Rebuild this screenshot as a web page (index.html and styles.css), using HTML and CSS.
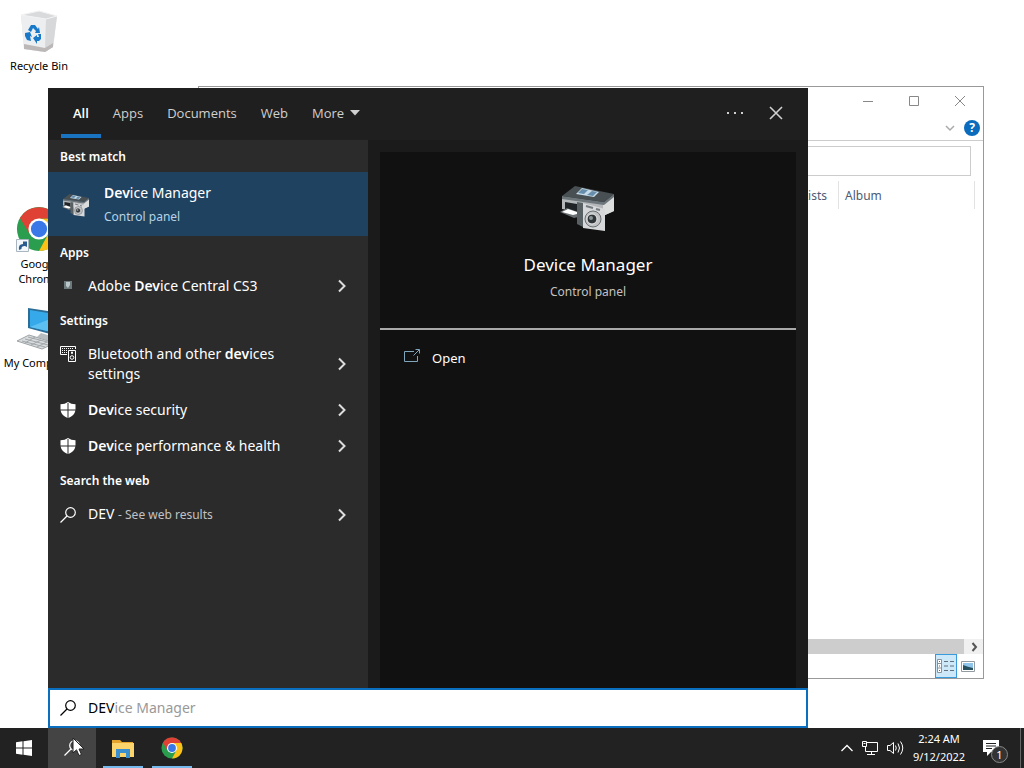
FILE: index.html
```html
<!DOCTYPE html>
<html lang="en">
<head>
  <meta charset="utf-8">
  <title>Desktop</title>
  <link rel="stylesheet" href="styles.css">
</head>
<body>
  <svg class="defs" width="0" height="0" aria-hidden="true">
    <symbol id="chrome" viewBox="0 0 48 48">
      <circle cx="24" cy="24" r="23" fill="#2a9d4e"/>
      <path d="M24 13 H44.200 A23 23 0 0 1 24 47 L33.500 29.500 Z" fill="#fbc116"/>
      <path d="M4.100 12.500 L14.500 29.500 L24 24 L24 13 L44 13 A23 23 0 0 0 4.100 12.500" fill="#df4234"/>
      <circle cx="24" cy="24" r="11" fill="#fff"/>
      <circle cx="24" cy="24" r="8.500" fill="#3b78e7"/>
    </symbol>
    <symbol id="chevron" viewBox="0 0 10 14">
      <path d="M2 1.500 L7.500 7 L2 12.500" fill="none" stroke="currentColor" stroke-width="2"/>
    </symbol>
    <symbol id="shield" viewBox="0 0 16 16">
      <path d="M8 0 Q11 2.200 15.500 2.200 V7.500 H8.500 V1 H7.500 V7.500 H.5 V2.200 Q5 2.200 8 0 Z M.6 8.500 H7.500 V16 Q1.500 13.500 .6 8.500 Z M8.500 8.500 H15.400 Q14.500 13.500 8.500 16 Z" fill="currentColor"/>
    </symbol>
    <symbol id="lens" viewBox="0 0 16 16">
      <circle cx="10.500" cy="5.500" r="4.800" fill="none" stroke="currentColor" stroke-width="1.200"/>
      <path d="M7 9 L.5 15.500" stroke="currentColor" stroke-width="1.200"/>
    </symbol>
    <symbol id="devices" viewBox="0 0 56 48">
      <path d="M2 14 L43 20 L54 12 V27 L43 32 L2 25 Z" fill="#b4b7b9"/>
      <path d="M43 20 L54 12 V27 L43 32 Z" fill="#dcdddd"/>
      <path d="M2 12 L15 2 L54 10 L44 18 Z" fill="#485054"/>
      <path d="M2 12 L44 18 L54 10 V13 L44 21 L2 15 Z" fill="#6d767a"/>
      <path d="M16 10 L22 4 L39 8 L34 13 Z" fill="#c8dbe8"/>
      <path d="M18 9 L22 5 L28 6 L24 10 Z M27 11 L32 7 L37 8 L33 12 Z" fill="#668eac"/>
      <path d="M5 18 L17 20 V29 L5 25 Z" fill="#202426"/>
      <path d="M0 28 L7 24 L18 28 V33 L14 34 Z" fill="#686e71"/>
      <path d="M2 28 L8 25 L17 28 V30 L13 31 Z" fill="#fff"/>
      <path d="M17 18 L23 19 V43 L17 40 Z" fill="#596064"/>
      <path d="M23 19 L45 25 V47 L23 44 Z" fill="#d7d8d9"/>
      <path d="M26 22 L33 24 M36 25 L40 26" stroke="#747b7f" stroke-width="2"/>
      <circle cx="33" cy="35" r="8" fill="#c1c3c5" stroke="#696f72"/>
      <circle cx="32" cy="35" r="5" fill="#303537" stroke="#eee"/>
      <circle cx="31" cy="34" r="2" fill="#899397"/>
    </symbol>
  </svg>

  <main class="desktop">
    <div class="shortcut bin">
      <svg width="40" height="44" viewBox="0 0 40 44">
        <path d="M2 5 L20 1 L38 6 L34 37 L26 42 L5 39 Z" fill="#e3e4e5"/>
        <path d="M2 5 L27 9 L26 42 L5 39 Z" fill="#eceef0"/>
        <path d="M27 9 L38 6 L34 37 L26 42 Z" fill="#d6d8da"/>
        <path d="M2 5 L20 1 L38 6 L27 9 Z" fill="#d8dadc" stroke="#f4f4f4"/>
        <path d="M5 34 L26 38 L34 33 V37 L26 42 L5 39 Z" fill="#bcb8b8"/>
        <g fill="#1979c9">
          <path d="M9 20 L12 15 H16 L19 19 L20 17 L21 23 H16 L17 21 L14 18 L12 22 Z"/>
          <path d="M6 23 L11 22 L13 27 L11 26 L12 31 L8 30 L6 26 Z"/>
          <path d="M14 28 L18 25 L18 27 L20 27 L19 24 L22 24 V29 L20 31 L18 31 V34 Z"/>
        </g>
      </svg>
      <span>Recycle Bin</span>
    </div>
    <div class="shortcut chrome">
      <div class="badged">
        <svg width="46" height="46"><use href="#chrome"/></svg>
        <svg class="arrow" width="13" height="13" viewBox="0 0 13 13">
          <path d="M.5 .5 H12.500 V12.500 H.5 Z" fill="#f4f8fb" stroke="#a9b5bf"/>
          <path d="M3 11 Q2 5 7 5 V2.500 H11 V8 L9 7 Q5 7 5.500 10 Z" fill="#2b5c90"/>
        </svg>
      </div>
      <span>Google Chrome</span>
    </div>
    <div class="shortcut computer">
      <svg width="44" height="44" viewBox="0 0 44 44">
        <path d="M11 1 L44 6 V30 L11 21 Z" fill="#2b6d96"/>
        <path d="M13 3 L43 8 V27 L13 20 Z" fill="#35a9ea"/>
        <path d="M13 20 L43 8 V27 Z" fill="#5cc0f2"/>
        <path d="M24 26 L34 29 L32 34 L20 30 Z" fill="#b8bdc0"/>
        <path d="M0 34 L12 28 L38 36 L25 42 Z" fill="#d9dcdd" stroke="#9da3a6"/>
        <path d="M5 34 L28 40 M8 32 L31 38 M11 30 L34 36 M8 36 L18 30 M14 38 L24 33 M20 40 L30 35" stroke="#a2a7aa"/>
      </svg>
      <span>My Computer</span>
    </div>

    <section class="explorer">
      <div class="caption">
        <button aria-label="Minimize"><svg width="10" height="12"><path d="M0 6.500 H10" stroke="#888"/></svg></button>
        <button aria-label="Maximize"><svg width="10" height="12"><path d="M.5 1.500 H9.500 V10.500 H.5 Z" fill="none" stroke="#888"/></svg></button>
        <button aria-label="Close window"><svg width="12" height="12"><path d="M1 1 L11 11 M11 1 L1 11" stroke="#888"/></svg></button>
      </div>
      <div class="ribbon">
        <button aria-label="Expand ribbon"><svg width="10" height="8"><path d="M1 2 L5 6 L9 2" fill="none" stroke="#aaa" stroke-width="1.500"/></svg></button>
        <button class="help" aria-label="Help">?</button>
      </div>
      <div class="address"><input type="text" aria-label="Search folder"></div>
      <table class="columns">
        <tr><th>Contributing artists</th><th class="album">Album</th></tr>
      </table>
      <div class="files"></div>
      <div class="scrollbar">
        <div class="thumb"></div>
        <button aria-label="Scroll right"><svg width="8" height="10"><path d="M2.500 1 L6 5 L2.500 9" fill="none" stroke="#555" stroke-width="2"/></svg></button>
      </div>
      <div class="views">
        <button class="selected" aria-label="Details">
          <svg width="18" height="14" viewBox="0 0 18 14" fill="none">
            <path d="M.5 .5 H4.500 V13.500 H.5 Z M.5 4.500 H4.500 M.5 9 H4.500" fill="#fff" stroke="#8b9299"/>
            <path d="M2 2.500 H3 M2 7 H3 M2 11.500 H3" stroke="#2d78b8"/>
            <path d="M7 2.500 H11 M13 2.500 H17 M7 7 H11 M13 7 H17 M7 11.500 H11 M13 11.500 H17" stroke="#62717c"/>
          </svg>
        </button>
        <button aria-label="Large icons">
          <svg width="14" height="11" viewBox="0 0 14 11">
            <path d="M.5 .5 H13.500 V10.500 H.5 Z" fill="#fff" stroke="#929aa2"/>
            <path d="M2 2 H12 V9 H2 Z" fill="#8fc4eb"/>
            <path d="M2 4 Q7 6 12 7 V9 H2 Z" fill="#27505f"/>
          </svg>
        </button>
      </div>
    </section>

    <section class="search">
      <nav class="tabs">
        <button class="active">All</button>
        <button>Apps</button>
        <button>Documents</button>
        <button>Web</button>
        <button class="more">More <svg width="10" height="6"><path d="M0 0 H10 L5 5.500 Z" fill="currentColor"/></svg></button>
        <button class="options" aria-label="Options"><svg width="16" height="4" fill="currentColor"><path d="M0 1 H2 V3 H0 Z M7 1 H9 V3 H7 Z M14 1 H16 V3 H14 Z"/></svg></button>
        <button class="close" aria-label="Close"><svg width="14" height="14"><path d="M1 1 L13 13 M13 1 L1 13" stroke="currentColor" stroke-width="1.600"/></svg></button>
      </nav>
      <div class="panes">
        <div class="results">
          <h2>Best match</h2>
          <a href="#" class="best">
            <svg width="28" height="24"><use href="#devices"/></svg>
            <span><span class="name"><b>Dev</b>ice Manager</span><span class="kind">Control panel</span></span>
          </a>
          <h2>Apps</h2>
          <a href="#" class="row">
            <svg class="icon" width="16" height="16"><path d="M4 3 H12 V11 H4 Z" fill="#6d7b7e"/><path d="M6 4 H10 V7 L8 10 L6 8 Z" fill="#b9c7c9"/></svg>
            <span class="name">Adobe <b>Dev</b>ice Central CS3</span>
            <svg class="chevron" width="10" height="14"><use href="#chevron"/></svg>
          </a>
          <h2>Settings</h2>
          <a href="#" class="row two">
            <svg class="icon" width="16" height="16" fill="none" stroke="currentColor">
              <path d="M7 8.500 H.5 V.5 H15.500 V3"/>
              <path d="M2 2.500 H14 M2 4.500 H8 M2 6.500 H7" stroke-dasharray="1 1"/>
              <path d="M8.500 4.500 H15.500 V15.500 H8.500 Z"/>
              <circle cx="12" cy="11.500" r="1.800"/>
              <path d="M11.500 6 H12.500 V7.500 H11.500 Z"/>
            </svg>
            <span class="name">Bluetooth and other <b>dev</b>ices settings</span>
            <svg class="chevron" width="10" height="14"><use href="#chevron"/></svg>
          </a>
          <a href="#" class="row">
            <svg class="icon" width="16" height="16"><use href="#shield"/></svg>
            <span class="name"><b>Dev</b>ice security</span>
            <svg class="chevron" width="10" height="14"><use href="#chevron"/></svg>
          </a>
          <a href="#" class="row">
            <svg class="icon" width="16" height="16"><use href="#shield"/></svg>
            <span class="name"><b>Dev</b>ice performance &amp; health</span>
            <svg class="chevron" width="10" height="14"><use href="#chevron"/></svg>
          </a>
          <h2>Search the web</h2>
          <a href="#" class="row">
            <svg class="icon" width="16" height="16"><use href="#lens"/></svg>
            <span class="name">DEV <small>- See web results</small></span>
            <svg class="chevron" width="10" height="14"><use href="#chevron"/></svg>
          </a>
        </div>
        <div class="preview">
          <div class="card">
            <svg width="56" height="48"><use href="#devices"/></svg>
            <h1>Device Manager</h1>
            <p>Control panel</p>
          </div>
          <a href="#" class="open">
            <svg width="16" height="14" viewBox="0 0 16 14" fill="none" stroke="#7fa6bd">
              <path d="M10 2.500 H.5 V12.500 H13.500 V7"/>
              <path d="M9.500 6.500 L15 1 M11.500 .5 H15.500 V4.500"/>
            </svg>
            Open
          </a>
        </div>
      </div>
      <label class="query">
        <svg width="16" height="16"><use href="#lens"/></svg>
        <span class="field">
          <span class="hint" aria-hidden="true"><span class="typed">DEV</span>ice Manager</span>
          <input type="text" value="DEV" aria-label="Search">
        </span>
      </label>
    </section>
  </main>

  <footer class="taskbar">
    <button class="task" aria-label="Start">
      <svg width="16" height="16" fill="#fff"><path d="M0 2.200 L6.500 1.300 V7.500 H0 Z M7.500 1.200 L16 0 V7.500 H7.500 Z M0 8.500 H6.500 V14.700 L0 13.800 Z M7.500 8.500 H16 V16 L7.500 14.800 Z"/></svg>
    </button>
    <button class="task lit" aria-label="Search">
      <svg width="16" height="16"><use href="#lens"/></svg>
      <svg class="pointer" width="13" height="20" viewBox="0 0 13 20"><path d="M1 1 V16 L4.500 12.800 L7 18.500 L9.500 17.500 L7 12 H12 Z" fill="#fff" stroke="#222"/></svg>
    </button>
    <button class="task running" aria-label="File Explorer">
      <svg width="22" height="19" viewBox="0 0 22 19">
        <path d="M0 1 H8 L10 3 H21 V18 H0 Z" fill="#e5a52c"/>
        <path d="M0 4 H22 V18 H0 Z" fill="#fbd56c"/>
        <path d="M4 10 H18 V19 H14 V14 H8 V19 H4 Z" fill="#3a8fd0"/>
      </svg>
    </button>
    <button class="task running" aria-label="Google Chrome">
      <svg width="22" height="22"><use href="#chrome"/></svg>
    </button>
    <div class="tray">
      <svg width="12" height="8" fill="none" stroke="#fff" stroke-width="1.300"><path d="M.5 7 L6 1.500 L11.500 7"/></svg>
      <svg width="16" height="15" fill="none" stroke="#fff"><path d="M5 1.500 H15.500 V10.500 H3.500 V6 M9.500 10.500 V13.500 M5 13.500 H13 M.5 .5 H4.500 V5.500 H.5 Z M1.500 2.500 H3.500"/></svg>
      <svg width="17" height="14" fill="none" stroke="#fff"><path d="M.5 4.500 H3 L6.500 1.500 V12.500 L3 9.500 H.5 Z M8.500 4.500 Q10 7 8.500 9.500 M11 2.500 Q14 7 11 11.500 M13.500 .5 Q18 7 13.500 13.500"/></svg>
    </div>
    <div class="clock"><span>2:24 AM</span><span>9/12/2022</span></div>
    <button class="notices" aria-label="Notifications">
      <svg width="16" height="16"><path d="M0 0 H16 V12 H8 L4 16 V12 H0 Z" fill="#fff"/><path d="M3 3.500 H13 M3 6 H13 M3 8.500 H9" stroke="#222"/></svg>
      <span class="count">1</span>
    </button>
  </footer>
</body>
</html>
```
FILE: styles.css
```css
* {
  box-sizing: border-box;
}
body {
  margin: 0;
  height: 100vh;
  display: flex;
  flex-direction: column;
  overflow: hidden;
  background: #fff;
  color: #fff;
  font: 14px/20px "Noto Sans", "Open Sans", sans-serif;
}
button {
  margin: 0;
  padding: 0;
  border: 0;
  background: none;
  color: inherit;
  font: inherit;
}
a {
  color: inherit;
  text-decoration: none;
}
svg {
  display: block;
  flex: none;
}
.defs {
  position: absolute;
}
.desktop {
  flex: 1;
  position: relative;
}

/* desktop icons */
.shortcut {
  position: absolute;
  left: 0;
  width: 78px;
  display: flex;
  flex-direction: column;
  align-items: center;
  gap: 4px;
  color: #000;
  font-size: 11px;
  line-height: 15px;
  text-align: center;
}
.bin {
  top: 10px;
}
.chrome {
  top: 206px;
}
.computer {
  top: 307px;
}
.badged {
  position: relative;
}
.arrow {
  position: absolute;
  left: 0;
  bottom: 0;
}

/* file explorer window */
.explorer {
  position: absolute;
  top: 86px;
  right: 40px;
  bottom: 49px;
  left: 198px;
  display: flex;
  flex-direction: column;
  border: 1px solid #999;
  background: #fff;
}
.caption {
  display: flex;
  justify-content: flex-end;
  height: 28px;
}
.caption button {
  width: 46px;
  display: grid;
  place-items: center;
}
.ribbon {
  display: flex;
  justify-content: flex-end;
  align-items: center;
  gap: 9px;
  height: 26px;
  padding-right: 3px;
  border-bottom: 1px solid #ccc;
}
.help {
  width: 16px;
  height: 16px;
  border-radius: 50%;
  background: #0b6cbd;
  color: #fff;
  font-size: 12px;
  font-weight: 700;
  line-height: 16px;
}
.address {
  padding: 5px 12px;
}
.address input {
  display: block;
  width: 100%;
  height: 30px;
  border: 1px solid #ccc;
}
.columns {
  width: 776px;
  border-collapse: collapse;
  color: #4c5a74;
  font-size: 12px;
}
.columns th {
  height: 28px;
  padding: 2px 11px 0 6px;
  border-right: 1px solid #e2e2e2;
  font-weight: 400;
  text-align: right;
}
.columns .album {
  width: 136px;
  text-align: left;
}
.files {
  flex: 1;
}
.scrollbar {
  display: flex;
  height: 15px;
  background: #f0f0f0;
}
.thumb {
  flex: 1;
  background: #cdcdcd;
}
.scrollbar button {
  width: 19px;
  display: grid;
  place-items: center;
}
.views {
  display: flex;
  justify-content: flex-end;
  padding-right: 4px;
}
.views button {
  width: 22px;
  height: 24px;
  display: grid;
  place-items: center;
}
.views .selected {
  border: 1px solid #3a9bdc;
  background: #cde8f9;
}

/* start search window */
.search {
  position: absolute;
  top: 88px;
  right: 216px;
  bottom: 0;
  left: 48px;
  display: flex;
  flex-direction: column;
  background: #1b1b1b;
}
.tabs {
  display: flex;
  height: 52px;
  padding: 0 13px;
  background: #1f1f1f;
  color: #d0d0d0;
  font-family: "Open Sans", "Noto Sans", sans-serif;
  font-size: 13px;
}
.tabs button {
  padding: 0 12px 2px;
}
.tabs .active {
  height: 50px;
  padding: 0 12px;
  border-top: 4px solid transparent;
  border-bottom: 4px solid #1a73c0;
  color: #fff;
  font-weight: 600;
}
.tabs .more {
  display: flex;
  align-items: center;
  gap: 6px;
}
.tabs .options {
  margin-left: auto;
}
.tabs .close {
  padding-left: 14px;
}
.panes {
  flex: 1;
  display: flex;
}
.results {
  width: 320px;
  background: #2b2b2b;
}
h2 {
  margin: 0;
  padding: 2px 12px 0;
  font-size: 12px;
  font-weight: 600;
  line-height: 30px;
}
.best {
  display: flex;
  align-items: center;
  gap: 14px;
  height: 64px;
  padding: 2px 14px 0;
  background: #1f4260;
}
.best .name,
.best .kind {
  display: block;
  line-height: 24px;
}
.best .kind {
  color: #b5d3e8;
  font-size: 12px;
}
b {
  font-weight: 600;
}
.row {
  display: flex;
  align-items: center;
  gap: 12px;
  padding: 8px 21px 8px 12px;
}
.row .name {
  flex: 1;
  padding-right: 24px;
}
.two .icon {
  align-self: flex-start;
  margin-top: 2px;
}
.chevron {
  color: #ddd;
}
small {
  color: #c2c2c2;
  font-size: 12px;
}
.preview {
  flex: 1;
  display: flex;
  flex-direction: column;
  padding: 12px 12px 0;
}
.card,
.open {
  background: #111;
}
.card {
  display: flex;
  flex-direction: column;
  align-items: center;
  padding: 32px 0 26px;
  border-bottom: 2px solid #a9a9a9;
}
h1 {
  margin: 20px 0 4px;
  font-size: 17px;
  font-weight: 400;
  line-height: 26px;
}
.card p {
  margin: 0;
  color: #c2c2c2;
  font-size: 12px;
}
.open {
  flex: 1;
  display: flex;
  align-items: flex-start;
  gap: 12px;
  padding: 18px 24px;
  font-size: 13px;
}
.open svg {
  margin-top: 1px;
}
.query {
  display: flex;
  align-items: center;
  gap: 12px;
  height: 40px;
  padding: 0 10px;
  border: 2px solid #0b6fc0;
  background: #fff;
  color: #000;
}
.field {
  position: relative;
  flex: 1;
}
.field input {
  position: relative;
  display: block;
  width: 100%;
  height: 20px;
  padding: 0;
  border: 0;
  outline: 0;
  background: transparent;
  color: #000;
  font: inherit;
}
.hint {
  position: absolute;
  color: #999;
}
.typed {
  visibility: hidden;
}

/* taskbar */
.taskbar {
  display: flex;
  height: 40px;
  background: #222;
}
.task {
  position: relative;
  width: 48px;
  display: grid;
  place-items: center;
}
.lit {
  background: #444;
}
.pointer {
  position: absolute;
  top: 9px;
  left: 24px;
}
.running {
  width: 40px;
  margin-left: 7px;
  border-top: 2px solid transparent;
  border-bottom: 2px solid #76b9ed;
}
.running + .running {
  margin-left: 9px;
}
.tray {
  display: flex;
  align-items: center;
  gap: 9px;
  margin-left: auto;
}
.clock {
  display: flex;
  flex-direction: column;
  justify-content: center;
  width: 70px;
  font-size: 11px;
  line-height: 18px;
  text-align: center;
}
.notices {
  position: relative;
  width: 47px;
  margin-right: 3px;
  padding-left: 9px;
  border-right: 1px solid #666;
}
.count {
  position: absolute;
  top: 18px;
  left: 17px;
  width: 17px;
  height: 17px;
  border: 1px solid #888;
  border-radius: 50%;
  background: #333;
  font-size: 11px;
  line-height: 15px;
}
```
